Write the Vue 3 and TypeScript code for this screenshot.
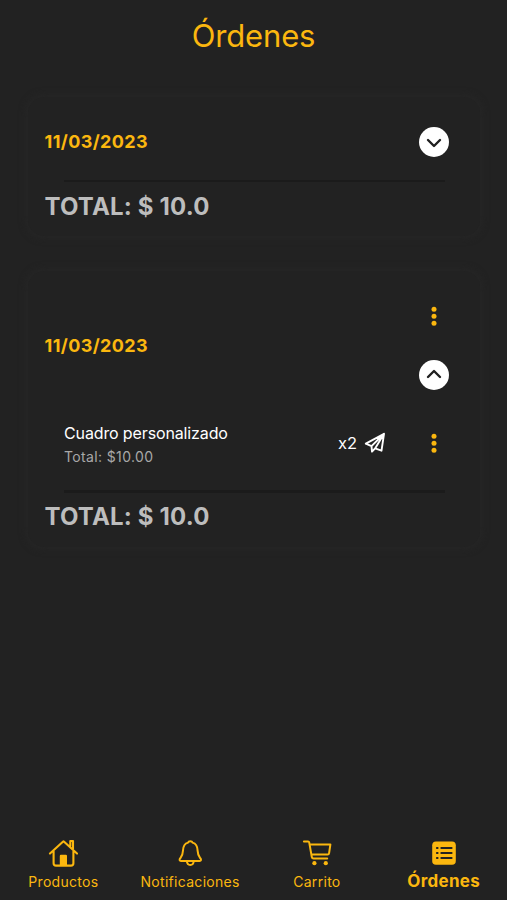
<script setup lang="ts">
import { ref } from 'vue'

interface OrderItem {
  name: string
  total: string
  quantity: number
}

interface Order {
  id: number
  date: string
  total: string
  open: boolean
  items: OrderItem[]
}

const orders = ref<Order[]>([
  {
    id: 1,
    date: '11/03/2023',
    total: '10.0',
    open: false,
    items: [{ name: 'Cuadro personalizado', total: '10.00', quantity: 2 }],
  },
  {
    id: 2,
    date: '11/03/2023',
    total: '10.0',
    open: true,
    items: [{ name: 'Cuadro personalizado', total: '10.00', quantity: 2 }],
  },
])

const tabs = ['Productos', 'Notificaciones', 'Carrito', 'Órdenes']
const activeTab = ref('Órdenes')
</script>

<template>
  <div class="screen">
    <header class="header"><h1 class="title">Órdenes</h1></header>

    <main class="orders">
      <article v-for="order in orders" :key="order.id" class="card" :class="{ open: order.open }">
        <div class="summary">
          <span class="date">{{ order.date }}</span>
          <div class="actions">
            <svg v-if="order.open" class="dots" viewBox="0 0 8 20">
              <circle cx="4" cy="3.2" r="2.5" /><circle cx="4" cy="10.2" r="2.5" /><circle cx="4" cy="17.2" r="2.5" />
            </svg>
            <button class="toggle" @click="order.open = !order.open">
              <svg viewBox="0 0 30 30">
                <path :d="order.open ? 'M9 17 15 11 21 17' : 'M9 13 15 19 21 13'" />
              </svg>
            </button>
          </div>
        </div>
        <template v-if="order.open">
          <div v-for="item in order.items" :key="item.name" class="item">
            <div class="info">
              <span class="name">{{ item.name }}</span>
              <span class="price">Total: ${{ item.total }}</span>
            </div>
            <span class="quantity">x{{ item.quantity }}</span>
            <svg class="plane" viewBox="0 0 22 22">
              <path d="M20 1.8 1.8 11.7 7.5 14.1 8 19.6 11.1 16.4 17.5 18.7ZM20 1.8 7.5 14.1M20 1.8 11.1 16.4" />
            </svg>
            <svg class="dots" viewBox="0 0 8 20">
              <circle cx="4" cy="3.2" r="2.5" /><circle cx="4" cy="10.2" r="2.5" /><circle cx="4" cy="17.2" r="2.5" />
            </svg>
          </div>
        </template>
        <div class="divider"></div>
        <p class="total">TOTAL: $ {{ order.total }}</p>
      </article>
    </main>

    <nav class="tabs">
      <button
        v-for="tab in tabs"
        :key="tab"
        class="tab"
        :class="{ active: tab === activeTab }"
        @click="activeTab = tab"
      >
        <svg v-if="tab === 'Productos'" class="icon home" viewBox="0 0 30 30">
          <path d="M2 14.6 14.9 2.7Q15.5 2.2 16.1 2.7L29 14.6M5.6 12.4V24.2Q5.6 26.6 8 26.6H23Q25.4 26.6 25.4 24.2V12.4M22.3 7V2H25V10" />
          <path class="solid" d="M11.8 26.6V16.9Q11.8 15.8 12.9 15.8H17.9Q19 15.8 19 16.9V26.6Z" />
        </svg>
        <svg v-else-if="tab === 'Notificaciones'" class="icon" viewBox="0 0 30 30">
          <path d="M15.3 2.2Q13.5 2.2 13.1 3.6C9.3 4.6 8.1 7.6 8 11.6C7.8 16.6 6.6 17.4 4.9 19.7Q4 21.9 5.9 21.9H24.7Q26.6 21.9 25.7 19.7C24 17.4 22.8 16.6 22.6 11.6C22.5 7.6 21.3 4.6 17.5 3.6Q17.1 2.2 15.3 2.2ZM11.8 22Q12.2 26 15.3 26T18.8 22" />
        </svg>
        <svg v-else-if="tab === 'Carrito'" class="icon" viewBox="0 0 30 30">
          <path d="M1.9 2.4H6Q7 2.4 7.2 3.4L9.8 18Q10.1 19.5 11.6 19.5H25.2M7.7 5.4H28.4L27.1 14.2Q26.9 15.6 25.5 15.6H9.4" />
          <circle class="solid" cx="12.4" cy="24.2" r="2.1" /><circle class="solid" cx="23.8" cy="24.2" r="2.1" />
        </svg>
        <svg v-else class="icon" viewBox="0 0 30 30">
          <rect class="solid" x="3.2" y="2.4" width="23.6" height="23.3" rx="3.8" />
          <path class="cut" d="M12.3 8.9H22.6M12.3 14H22.6M12.3 19.1H22.6M7.9 8.9H8.6M7.9 14H8.6M7.9 19.1H8.6" />
        </svg>
        <span class="label">{{ tab }}</span>
      </button>
    </nav>
  </div>
</template>

<style>
body {
  margin: 0;
  background: #222222;
}
</style>

<style scoped>
.screen {
  box-sizing: border-box;
  height: 900px;
  display: flex;
  flex-direction: column;
  background: #222222;
  color: #ffffff;
  font-family: Inter, "Liberation Sans", sans-serif;
}
.header {
  height: 97px;
  box-sizing: border-box;
  padding-top: 16px;
  text-align: center;
}
.title {
  margin: 0;
  color: #fbb70f;
  font-size: 31px;
  line-height: 40px;
  font-weight: 400;
  letter-spacing: -0.15px;
}
.orders {
  flex: 1;
  display: flex;
  flex-direction: column;
  align-items: flex-start;
  gap: 35px;
  padding: 0 27px 0 28px;
}
.card {
  box-sizing: border-box;
  width: 452px;
  padding: 0 31px 0 17px;
  height: 139px;
  border-radius: 16px;
  background: #222222;
  box-shadow: 0 0 7px 2px #262626;
}
.card.open {
  height: 276px;
}
.summary {
  height: 83px;
  padding-top: 7px;
  box-sizing: border-box;
  display: flex;
  align-items: center;
  justify-content: space-between;
}
.open .summary {
  height: 140px;
  padding-top: 10px;
}
.date {
  margin-left: -0.5px;
  color: #fbb70f;
  font-size: 18px;
  font-weight: 700;
  line-height: 24px;
  letter-spacing: 0.38px;
}
.actions {
  display: flex;
  flex-direction: column;
  align-items: center;
  gap: 34px;
}
.open .actions {
  padding-top: 4px;
}
.dots {
  width: 8px;
  height: 20px;
  flex: none;
  fill: #fbb70f;
}
.toggle {
  width: 30px;
  height: 30px;
  padding: 0;
  border: 0;
  border-radius: 50%;
  background: #ffffff;
}
.toggle svg {
  display: block;
  width: 30px;
  height: 30px;
  fill: none;
  stroke: #202020;
  stroke-width: 2.4;
  stroke-linecap: round;
  stroke-linejoin: round;
}
.item {
  height: 79px;
  padding: 0 11px 15px 19px;
  box-sizing: border-box;
  display: flex;
  align-items: center;
}
.info {
  flex: 1;
  display: flex;
  flex-direction: column;
  gap: 4px;
  padding-top: 4px;
}
.name {
  font-size: 16px;
  line-height: 20px;
  letter-spacing: -0.13px;
}
.price {
  color: #a8a8a8;
  font-size: 14px;
  line-height: 20px;
  letter-spacing: 0.36px;
}
.quantity {
  font-size: 16.5px;
  line-height: 22px;
}
.plane {
  width: 22px;
  height: 22px;
  margin: 0 44.5px 0 6.5px;
  fill: none;
  stroke: #ffffff;
  stroke-width: 1.9;
  stroke-linejoin: round;
}
.divider {
  height: 2px;
  margin: 0 4px 0 19px;
  background: #1b1b1b;
}
.open .divider {
  height: 3px;
}
.total {
  margin: 10px 0 0 -0.5px;
  color: #bdbdbd;
  font-size: 24px;
  line-height: 30px;
  font-weight: 700;
  letter-spacing: 0.17px;
}
.open .total {
  margin-top: 9px;
}
.tabs {
  height: 69px;
  display: grid;
  grid-template-columns: repeat(4, 1fr);
}
.tab {
  display: flex;
  flex-direction: column;
  align-items: center;
  padding: 8px 0 0;
  border: 0;
  background: none;
  color: #fbb70f;
  font-family: inherit;
}
.icon {
  width: 30px;
  height: 30px;
  fill: none;
  stroke: #fbb70f;
  stroke-width: 2;
  stroke-linecap: round;
  stroke-linejoin: round;
}
.home {
  stroke-width: 2.1;
}
.solid {
  fill: #fbb70f;
  stroke: none;
}
.cut {
  stroke: #222222;
}
.label {
  margin-top: 3px;
  font-size: 14px;
  line-height: 20px;
  letter-spacing: 0.3px;
}
.active .label {
  margin-top: 2px;
  font-size: 17px;
  font-weight: 700;
}
</style>
